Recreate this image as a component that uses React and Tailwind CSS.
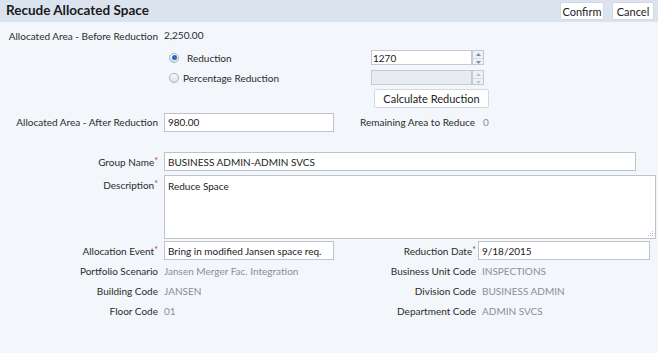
import React from "react";

const font = { fontFamily: "Lato, 'Liberation Sans', sans-serif" };

const Req = () => <span className="text-[#c0392b] text-[9px] align-top relative top-[-1px]">*</span>;

const Label = ({ children, req, className = "" }) => (
  <div className={"text-right text-[#2b2b2b] whitespace-nowrap " + className}>
    {children}
    {req && <Req />}
  </div>
);

const Spinner = ({ disabled }) => (
  <div className="w-[12px] h-[15px] flex flex-col border border-[#c4cad3] bg-[#eef1f5]">
    {["M2 5 L4.5 2 L7 5 Z", "M2 2 L4.5 5 L7 2 Z"].map((d) => (
      <div key={d} className="flex-1 flex items-center justify-center border-b border-[#d5dae1] last:border-b-0">
        <svg width="9" height="7" viewBox="0 0 9 7">
          <path d={d} fill={disabled ? "#c3c8cf" : "#6f8db3"} />
        </svg>
      </div>
    ))}
  </div>
);

const Radio = ({ checked }) => (
  <div className="w-[10px] h-[10px] rounded-full border border-[#a9b0ba] bg-gradient-to-b from-[#ffffff] to-[#d9dde3] flex items-center justify-center">
    {checked && <div className="w-[5px] h-[5px] rounded-full bg-[#1f6fb8]" />}
  </div>
);

const Field = ({ children, className = "" }) => (
  <div className={"h-[19px] bg-white border border-[#bcc3cd] px-[3px] flex items-center text-[#222] whitespace-nowrap overflow-hidden " + className}>
    {children}
  </div>
);

const Btn = ({ children, className = "" }) => (
  <div className={"bg-white border border-[#d3d9e1] rounded-[2px] text-[#222] flex items-center justify-center " + className}>
    {children}
  </div>
);

export default function App() {
  return (
    <div className="w-[658px] h-[353px] bg-[#f3f6fa] text-[10px] leading-none" style={font}>
      <div className="h-[22px] bg-[#dbe3ef] flex items-center justify-between pl-[6px] pr-[4px]">
        <div className="font-bold text-[13.5px] text-[#1a1a1a]">Recude Allocated Space</div>
        <div className="flex gap-[8px]">
          <Btn className="w-[44px] h-[18px] text-[11px]">Confirm</Btn>
          <Btn className="w-[42px] h-[18px] text-[11px]">Cancel</Btn>
        </div>
      </div>

      <div className="flex items-center h-[14px] mt-[7px]">
        <Label className="w-[158px]">Allocated Area - Before Reduction</Label>
        <div className="ml-[6px] text-[#2b2b2b] relative top-[-1px]">2,250.00</div>
      </div>

      <div className="flex items-center h-[15px] mt-[7px]">
        <div className="ml-[169px] w-[202px] flex items-center gap-[8px]">
          <Radio checked />
          <span className="text-[#2b2b2b]">Reduction</span>
        </div>
        <div className="w-[101px] h-[15px] bg-white border border-[#c4cad3] px-[1px] flex items-center text-[#222]">1270</div>
        <Spinner />
      </div>

      <div className="flex items-center h-[15px] mt-[5px]">
        <div className="ml-[169px] w-[202px] flex items-center gap-[4px]">
          <Radio />
          <span className="text-[#2b2b2b]">Percentage Reduction</span>
        </div>
        <div className="w-[101px] h-[15px] bg-[#e8ebef] border border-[#c4cad3]" />
        <Spinner disabled />
      </div>

      <div className="flex mt-[4px]">
        <Btn className="ml-[374px] w-[115px] h-[19px] text-[11px]">Calculate Reduction</Btn>
      </div>

      <div className="flex items-center mt-[5px] h-[18px]">
        <Label className="w-[158px]">Allocated Area - After Reduction</Label>
        <Field className="ml-[6px] w-[170px] h-[18px]">980.00</Field>
        <Label className="w-[141px]">Remaining Area to Reduce</Label>
        <div className="ml-[8px] text-[#8a8f98]">0</div>
      </div>

      <div className="flex items-center mt-[21px]">
        <Label req className="w-[158px]">Group Name</Label>
        <Field className="ml-[6px] w-[472px]">BUSINESS ADMIN-ADMIN SVCS</Field>
      </div>

      <div className="flex mt-[4px]">
        <Label req className="w-[158px] pt-[5px]">Description</Label>
        <div className="ml-[6px] w-[492px] h-[64px] bg-white border border-[#bcc3cd] px-[3px] pt-[5px] text-[#222] relative">
          Reduce Space
          <svg className="absolute right-[1px] bottom-[1px]" width="7" height="7" viewBox="0 0 7 7">
            <rect x="5" y="1" width="1" height="1" fill="#b5bcc6" />
            <rect x="3" y="3" width="1" height="1" fill="#b5bcc6" />
            <rect x="5" y="3" width="1" height="1" fill="#b5bcc6" />
            <rect x="1" y="5" width="1" height="1" fill="#b5bcc6" />
            <rect x="3" y="5" width="1" height="1" fill="#b5bcc6" />
            <rect x="5" y="5" width="1" height="1" fill="#b5bcc6" />
          </svg>
        </div>
      </div>

      <div className="flex items-center mt-[2px]">
        <Label req className="w-[158px]">Allocation Event</Label>
        <Field className="ml-[6px] w-[170px]">Bring in modified Jansen space req.</Field>
        <Label req className="w-[142px]">Reduction Date</Label>
        <Field className="ml-[2px] w-[172px]">9/18/2015</Field>
      </div>

      {[
        ["Portfolio Scenario", "Jansen Merger Fac. Integration", "Business Unit Code", "INSPECTIONS"],
        ["Building Code", "JANSEN", "Division Code", "BUSINESS ADMIN"],
        ["Floor Code", "01", "Department Code", "ADMIN SVCS"],
      ].map(([l1, v1, l2, v2], i) => (
        <div key={l1} className={"flex items-center h-[14px] " + (i === 0 ? "mt-[4px]" : "mt-[6px]")}>
          <Label className="w-[158px]">{l1}</Label>
          <div className="ml-[6px] w-[170px] text-[#8a8f98]">{v1}</div>
          <Label className="w-[142px]">{l2}</Label>
          <div className="ml-[6px] text-[#8a8f98]">{v2}</div>
        </div>
      ))}
    </div>
  );
}
